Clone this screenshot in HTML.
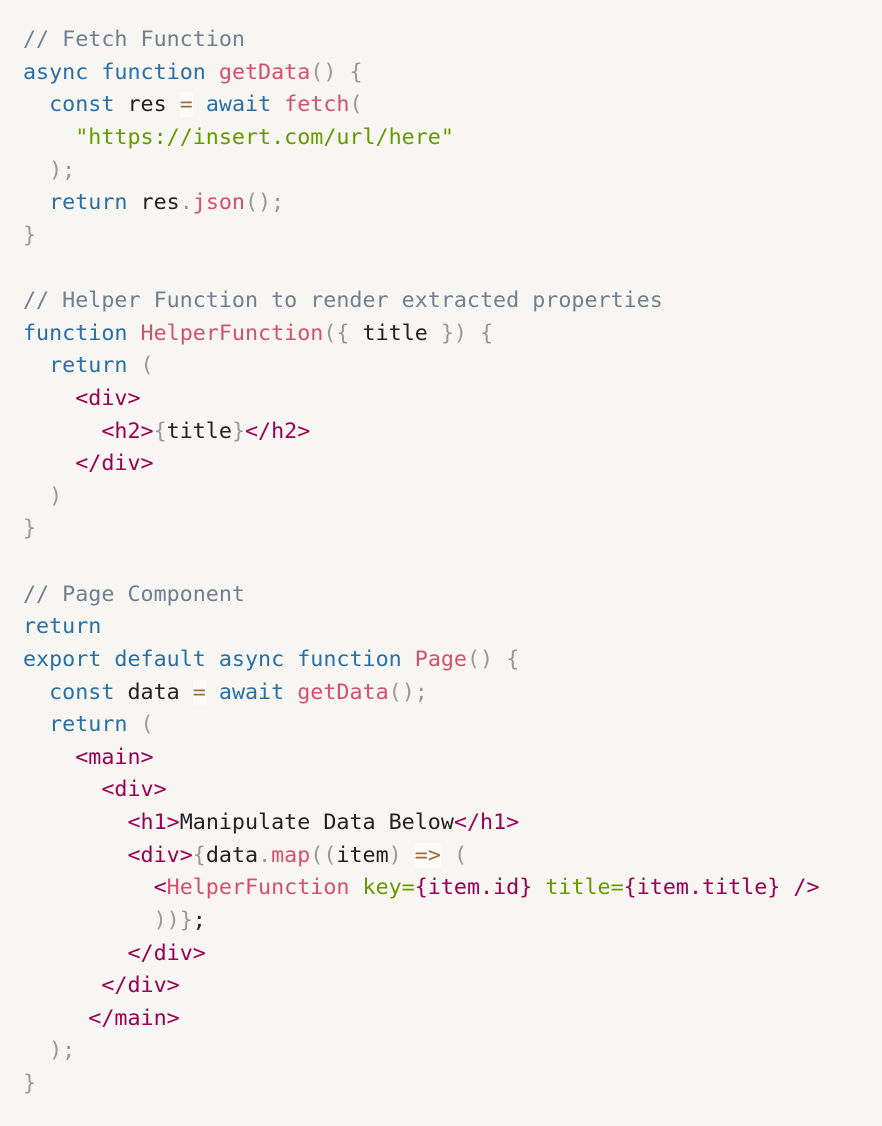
<!DOCTYPE html>
<html><head><meta charset="utf-8"><style>
html,body{margin:0;padding:0;background:#f7f6f3;}
body{width:882px;height:1126px;overflow:hidden;}
pre{margin:0;padding:24px 0 0 23px;font-family:"DejaVu Sans Mono","Liberation Mono",monospace;font-size:21.7px;line-height:32.62px;color:#222;white-space:pre;}
.c{color:#708090}.k{color:#2a6fa3}.f{color:#d5506c}.s{color:#690}.p{color:#999}.o{color:#9a6e3a;background:rgba(255,255,255,.6)}.t{color:#905}.a{color:#690}
</style></head><body><pre><span class="c">// Fetch Function</span>
<span class="k">async</span> <span class="k">function</span> <span class="f">getData</span><span class="p">()</span> <span class="p">{</span>
  <span class="k">const</span> res <span class="o">=</span> <span class="k">await</span> <span class="f">fetch</span><span class="p">(</span>
    <span class="s">"https://insert.com/url/here"</span>
  <span class="p">);</span>
  <span class="k">return</span> res<span class="p">.</span><span class="f">json</span><span class="p">();</span>
<span class="p">}</span>

<span class="c">// Helper Function to render extracted properties</span>
<span class="k">function</span> <span class="f">HelperFunction</span><span class="p">({</span> title <span class="p">})</span> <span class="p">{</span>
  <span class="k">return</span> <span class="p">(</span>
    <span class="t">&lt;div&gt;</span>
      <span class="t">&lt;h2&gt;</span><span class="p">{</span>title<span class="p">}</span><span class="t">&lt;/h2&gt;</span>
    <span class="t">&lt;/div&gt;</span>
  <span class="p">)</span>
<span class="p">}</span>

<span class="c">// Page Component</span>
<span class="k">return</span>
<span class="k">export</span> <span class="k">default</span> <span class="k">async</span> <span class="k">function</span> <span class="f">Page</span><span class="p">()</span> <span class="p">{</span>
  <span class="k">const</span> data <span class="o">=</span> <span class="k">await</span> <span class="f">getData</span><span class="p">();</span>
  <span class="k">return</span> <span class="p">(</span>
    <span class="t">&lt;main&gt;</span>
      <span class="t">&lt;div&gt;</span>
        <span class="t">&lt;h1&gt;</span>Manipulate Data Below<span class="t">&lt;/h1&gt;</span>
        <span class="t">&lt;div&gt;</span><span class="p">{</span>data<span class="p">.</span><span class="f">map</span><span class="p">((</span>item<span class="p">)</span> <span class="o">=&gt;</span> <span class="p">(</span>
          <span class="t">&lt;</span><span class="f">HelperFunction</span> <span class="a">key=</span><span class="t">{item.id}</span> <span class="a">title=</span><span class="t">{item.title} /&gt;</span>
          <span class="p">))}</span>;
        <span class="t">&lt;/div&gt;</span>
      <span class="t">&lt;/div&gt;</span>
     <span class="t">&lt;/main&gt;</span>
  <span class="p">);</span>
<span class="p">}</span></pre></body></html>
